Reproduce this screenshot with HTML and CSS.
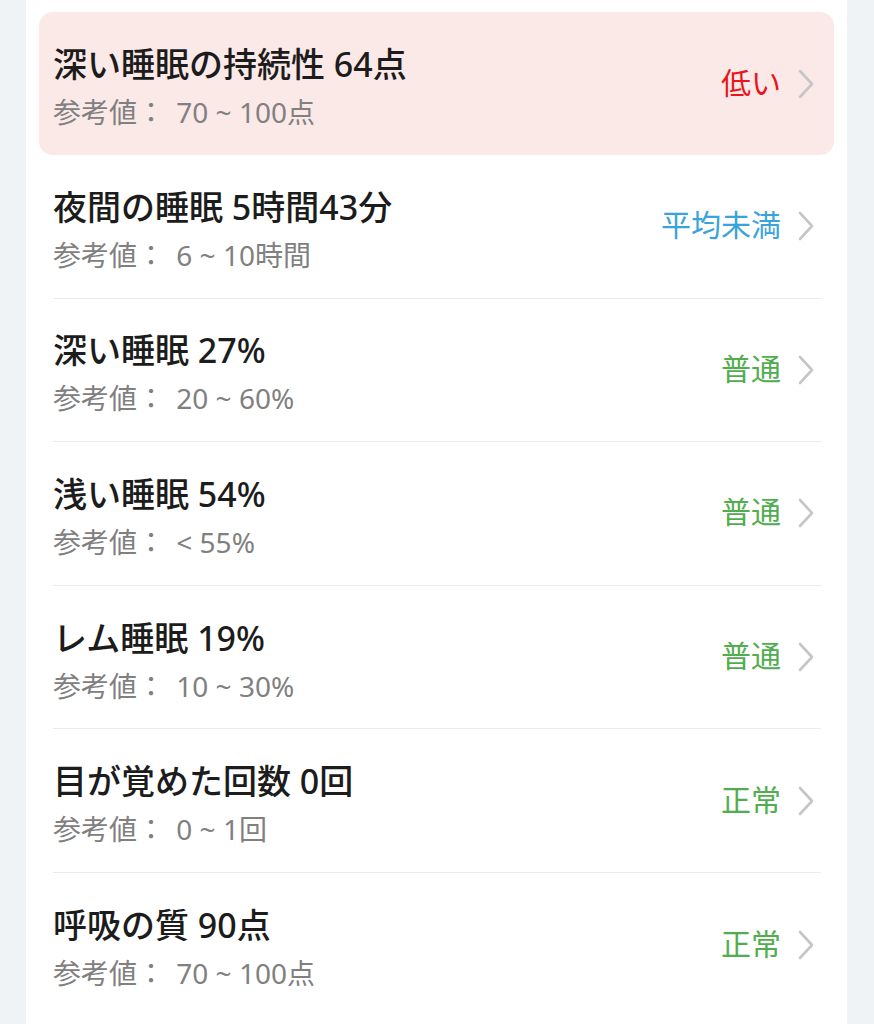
FILE: index.html
```html
<!DOCTYPE html>
<html lang="ja">
<head>
<meta charset="utf-8">
<link rel="stylesheet" href="styles.css">
</head>
<body>
<div class="card">
  <ul class="list">
    <li class="row row-alert">
      <div class="row-inner">
        <div class="text">
          <div class="title">深い睡眠の持続性 64点</div>
          <div class="sub">参考値<span class="colon">：</span> 70 ~ 100点</div>
        </div>
        <div class="status red">低い</div>
        <svg class="chev" viewBox="0 0 16 30"><path d="M2 2 L14 15 L2 28"/></svg>
      </div>
    </li>
    <li class="row">
      <div class="row-inner">
        <div class="text">
          <div class="title">夜間の睡眠 5時間43分</div>
          <div class="sub">参考値<span class="colon">：</span> 6 ~ 10時間</div>
        </div>
        <div class="status blue">平均未満</div>
        <svg class="chev" viewBox="0 0 16 30"><path d="M2 2 L14 15 L2 28"/></svg>
      </div>
    </li>
    <li class="row">
      <div class="row-inner">
        <div class="text">
          <div class="title">深い睡眠 27%</div>
          <div class="sub">参考値<span class="colon">：</span> 20 ~ 60%</div>
        </div>
        <div class="status green">普通</div>
        <svg class="chev" viewBox="0 0 16 30"><path d="M2 2 L14 15 L2 28"/></svg>
      </div>
    </li>
    <li class="row">
      <div class="row-inner">
        <div class="text">
          <div class="title">浅い睡眠 54%</div>
          <div class="sub">参考値<span class="colon">：</span> &lt; 55%</div>
        </div>
        <div class="status green">普通</div>
        <svg class="chev" viewBox="0 0 16 30"><path d="M2 2 L14 15 L2 28"/></svg>
      </div>
    </li>
    <li class="row">
      <div class="row-inner">
        <div class="text">
          <div class="title">レム睡眠 19%</div>
          <div class="sub">参考値<span class="colon">：</span> 10 ~ 30%</div>
        </div>
        <div class="status green">普通</div>
        <svg class="chev" viewBox="0 0 16 30"><path d="M2 2 L14 15 L2 28"/></svg>
      </div>
    </li>
    <li class="row">
      <div class="row-inner">
        <div class="text">
          <div class="title">目が覚めた回数 0回</div>
          <div class="sub">参考値<span class="colon">：</span> 0 ~ 1回</div>
        </div>
        <div class="status green">正常</div>
        <svg class="chev" viewBox="0 0 16 30"><path d="M2 2 L14 15 L2 28"/></svg>
      </div>
    </li>
    <li class="row row-last">
      <div class="row-inner">
        <div class="text">
          <div class="title">呼吸の質 90点</div>
          <div class="sub">参考値<span class="colon">：</span> 70 ~ 100点</div>
        </div>
        <div class="status green">正常</div>
        <svg class="chev" viewBox="0 0 16 30"><path d="M2 2 L14 15 L2 28"/></svg>
      </div>
    </li>
  </ul>
</div>
</body>
</html>
```
FILE: styles.css
```css
html, body {
  margin: 0;
  padding: 0;
}
body {
  background: #f0f3f5;
  font-family: Roboto, "Noto Sans CJK JP", sans-serif;
  width: 874px;
  height: 1024px;
  overflow: hidden;
}
.card {
  margin: 0 27px 0 26px;
  background: #ffffff;
  height: 1024px;
  padding-top: 12px;
  box-sizing: border-box;
}
.list {
  list-style: none;
  margin: 0;
  padding: 0 13px;
}
.row {
  padding: 0 0 0 14px;
  border-radius: 14px;
}
.row-alert {
  background: #fbe9e8;
  padding-right: 13px;
}
.row:not(.row-alert) {
  margin-right: 13px;
}
.row-inner {
  display: flex;
  align-items: center;
  height: 143.6px;
  box-sizing: border-box;
  border-bottom: 1px solid #ebebeb;
}
.row-alert .row-inner,
.row-last .row-inner {
  border-bottom: none;
}
.row-alert .row-inner {
  height: 143px;
}
.text {
  flex: 1;
  padding-top: 8px;
}
.title {
  font-family: "Noto Sans", "Noto Sans CJK JP", sans-serif;
  font-size: 34px;
  font-weight: 500;
  color: #1c1c1c;
  line-height: 42px;
  -webkit-text-stroke: 0;
}
.sub {
  font-family: "Noto Sans", "Noto Sans CJK JP", sans-serif;
  font-size: 28px;
  color: #808080;
  line-height: 40px;
  margin-top: 6px;
}
.colon {
  font-family: "Noto Sans CJK SC", sans-serif;
  margin-right: 4px;
}
.status {
  font-size: 30px;
  line-height: 40px;
}
.red { color: #e8161c; }
.blue { color: #3aa3da; }
.green { color: #52ad4f; }
.chev {
  width: 16px;
  height: 30px;
  margin-left: 17px;
  margin-right: 7px;
}
.chev path {
  fill: none;
  stroke: #c6c6c6;
  stroke-width: 2.6;
  stroke-linecap: round;
  stroke-linejoin: round;
}
```
